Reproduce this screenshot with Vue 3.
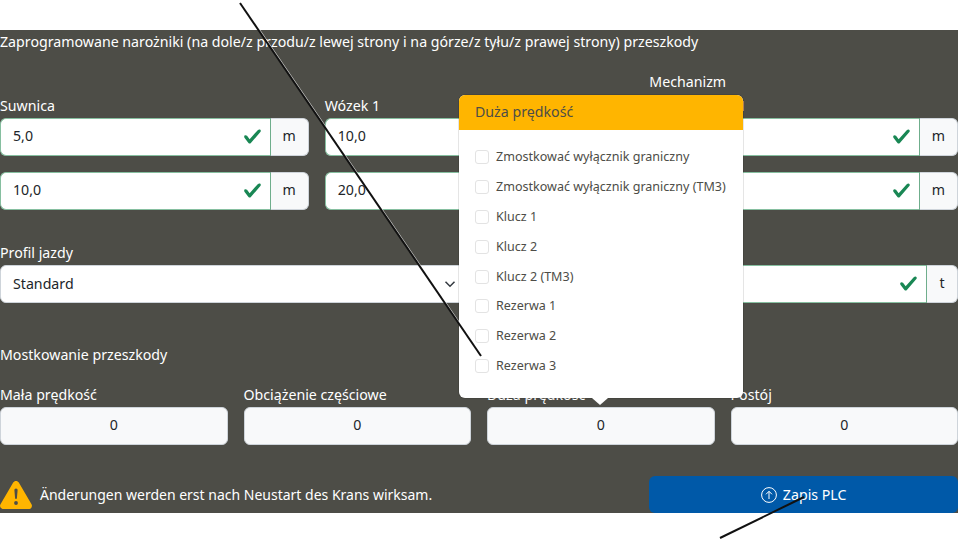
<script setup>
const corners = [
  { label: 'Suwnica', a: '5,0', b: '10,0' },
  { label: 'Wózek 1', a: '10,0', b: '20,0' },
  { label: 'Mechanizm podnoszenia 1', a: '', b: '' },
]
const bridges = ['Mała prędkość', 'Obciążenie częściowe', 'Duża prędkość', 'Postój']
const options = [
  'Zmostkować wyłącznik graniczny',
  'Zmostkować wyłącznik graniczny (TM3)',
  'Klucz 1',
  'Klucz 2',
  'Klucz 2 (TM3)',
  'Rezerwa 1',
  'Rezerwa 2',
  'Rezerwa 3',
]
const checkPath = 'M2.3 6.73.6 4.53c-.4-1.04.46-1.4 1.1-.8l1.1 1.4 3.4-3.8c.6-.63 1.6-.27 1.2.7l-4 4.6c-.43.5-.8.4-1.1.1z'
</script>

<template>
  <div class="page">
    <section class="panel">
      <div class="title">Zaprogramowane narożniki (na dole/z przodu/z lewej strony i na górze/z tyłu/z prawej strony) przeszkody</div>

      <div class="corners">
        <div v-for="c in corners" :key="c.label" class="corner">
          <label class="label">{{ c.label }}</label>
          <div class="group">
            <div class="field"><span>{{ c.a }}</span><svg class="check" viewBox="0 0 8 8"><path :d="checkPath" /></svg></div>
            <div class="unit">m</div>
          </div>
          <div class="group second">
            <div class="field"><span>{{ c.b }}</span><svg class="check" viewBox="0 0 8 8"><path :d="checkPath" /></svg></div>
            <div class="unit">m</div>
          </div>
        </div>
      </div>

      <div class="profile">
        <div>
          <label class="label">Profil jazdy</label>
          <div class="select">
            <span>Standard</span>
            <svg class="chevron" viewBox="0 0 16 16"><path d="M2 5l6 6 6-6" /></svg>
          </div>
        </div>
        <div class="load">
          <div class="group">
            <div class="field"><span></span><svg class="check" viewBox="0 0 8 8"><path :d="checkPath" /></svg></div>
            <div class="unit">t</div>
          </div>
        </div>
      </div>

      <div class="subtitle">Mostkowanie przeszkody</div>

      <div class="bridges">
        <div v-for="b in bridges" :key="b">
          <label class="label">{{ b }}</label>
          <div class="count">0</div>
        </div>
      </div>

      <div class="footer">
        <div class="notice">
          <svg class="warn" viewBox="0 0 32 28">
            <path d="M16 0c1.2 0 2.2.6 2.8 1.6l12.7 21.6c.6 1 .6 2.3 0 3.3-.6 1-1.7 1.5-2.8 1.5H3.3c-1.1 0-2.2-.6-2.8-1.5-.6-1-.6-2.3 0-3.3L13.200 1.600C13.800.6 14.800 0 16 0z" fill="#ffb500" />
            <path d="M16 7.500c-1 0-1.700.8-1.600 1.800l.7 7.900c0 .5.400.8.900.8s.9-.3.900-.8l.7-7.900c.1-1-.6-1.800-1.600-1.800z" fill="#4d4d47" />
            <circle cx="16" cy="22" r="1.900" fill="#4d4d47" />
          </svg>
          <span>Änderungen werden erst nach Neustart des Krans wirksam.</span>
        </div>
        <button class="save">
          <svg class="up" viewBox="0 0 16 16">
            <circle cx="8" cy="8" r="7.400" />
            <path d="M8 12V4.400M5 7.300l3-3 3 3" />
          </svg>
          Zapis PLC
        </button>
      </div>
    </section>

    <div class="popover">
      <div class="pop-head">Duża prędkość</div>
      <div class="pop-body">
        <label v-for="o in options" :key="o" class="option">
          <span class="box"></span>
          <span>{{ o }}</span>
        </label>
      </div>
      <div class="arrow"></div>
    </div>

    <svg class="lines" viewBox="0 0 958 544">
      <path d="M241.400 3.500L482.400 356.500" stroke="#fff" stroke-width="1.300" opacity=".8" />
      <path d="M240 3L481 356" stroke="#111" stroke-width="2" />
      <path d="M720 538L804 497" stroke="#111" stroke-width="2" />
    </svg>
  </div>
</template>

<style>
html, body { margin: 0; background: #fff; }
</style>

<style scoped>
.page {
  position: relative;
  width: 958px;
  height: 544px;
  overflow: hidden;
  padding-top: 30px;
  box-sizing: border-box;
  background: #fff;
  font-family: "Noto Sans", sans-serif;
  font-size: 14.200px;
  line-height: 24px;
  color: #fff;
}
.panel {
  height: 483px;
  background: #4d4d47;
}
.corners {
  display: grid;
  grid-template-columns: repeat(3, 1fr);
  column-gap: 16px;
  margin-top: 16px;
}
.corner {
  display: flex;
  flex-direction: column;
  justify-content: flex-end;
}
.label { display: block; }
.corner .label { width: 100px; }
.corner:first-child .label, .corner:nth-child(2) .label { width: auto; }
.group {
  display: flex;
  height: 38px;
  box-sizing: border-box;
}
.second { margin-top: 16px; }
.field {
  flex: 1;
  display: flex;
  align-items: center;
  justify-content: space-between;
  box-sizing: border-box;
  padding: 0 8px 2px 12px;
  background: #fff;
  border: 1px solid #86bfa0;
  border-right: 1px solid #6fae8c;
  border-radius: 6px 0 0 6px;
  color: #212529;
}
.check { width: 19px; height: 19px; fill: #198754; }
.unit {
  width: 38px;
  display: flex;
  align-items: center;
  justify-content: center;
  padding-bottom: 2px;
  background: #f8f9fa;
  border: 1px solid #ced4da;
  border-left: 0;
  border-radius: 0 6px 6px 0;
  color: #212529;
  box-sizing: border-box;
}
.profile {
  display: grid;
  grid-template-columns: 1fr 1fr;
  column-gap: 16px;
  margin-top: 31px;
}
.load { align-self: end; }
.profile .unit { width: 31px; }
.select {
  height: 38px;
  box-sizing: border-box;
  display: flex;
  align-items: center;
  justify-content: space-between;
  padding: 0 14px 0 12px;
  background: #fff;
  border: 1px solid #ced4da;
  border-radius: 6px;
  color: #212529;
}
.chevron { width: 12px; height: 12px; fill: none; stroke: #343a40; stroke-width: 2; }
.subtitle { margin-top: 40px; }
.bridges {
  display: grid;
  grid-template-columns: repeat(4, 1fr);
  column-gap: 16px;
  margin-top: 16px;
}
.count {
  height: 38px;
  box-sizing: border-box;
  display: flex;
  align-items: center;
  justify-content: center;
  padding-bottom: 2px;
  background: #f8f9fa;
  border: 1px solid #ced4da;
  border-radius: 6px;
  color: #212529;
}
.footer {
  display: flex;
  justify-content: space-between;
  align-items: flex-end;
  margin-top: 31px;
}
.notice {
  display: flex;
  align-items: center;
  gap: 8px;
  padding-bottom: 4px;
  font-size: 14px;
}
.warn { width: 32px; height: 28px; }
.save {
  width: 308.700px;
  height: 37px;
  display: flex;
  align-items: center;
  justify-content: center;
  gap: 6px;
  border: 0;
  border-radius: 6px;
  background: #0059a8;
  color: #fff;
  font: inherit;
  padding: 0;
}
.up { width: 16px; height: 16px; fill: none; stroke: #fff; stroke-width: 1; }
.popover {
  position: absolute;
  left: 459px;
  top: 95px;
  width: 284px;
  height: 303px;
  background: #fff;
  border-radius: 6px;
  box-shadow: 0 0 0 1px rgba(0, 0, 0, .1);
  color: #4d4d47;
}
.pop-head {
  height: 35px;
  display: flex;
  align-items: center;
  padding: 0 0 2px 16px;
  box-sizing: border-box;
  background: #ffb500;
  border-radius: 6px 6px 0 0;
}
.pop-body {
  display: flex;
  flex-direction: column;
  padding-top: 12px;
}
.option {
  display: flex;
  align-items: center;
  height: 29.900px;
  padding-left: 16px;
  gap: 7px;
  font-size: 12.550px;
  line-height: 20px;
  white-space: nowrap;
}
.box {
  width: 14px;
  height: 14px;
  box-sizing: border-box;
  border: 1px solid #e3e3e3;
  border-radius: 3px;
  background: #fff;
}
.arrow {
  position: absolute;
  left: 133px;
  top: 303px;
  width: 0;
  height: 0;
  border-left: 8px solid transparent;
  border-right: 8px solid transparent;
  border-top: 7px solid #fff;
}
.lines {
  position: absolute;
  inset: 0;
  width: 958px;
  height: 544px;
  fill: none;
  pointer-events: none;
}
</style>
